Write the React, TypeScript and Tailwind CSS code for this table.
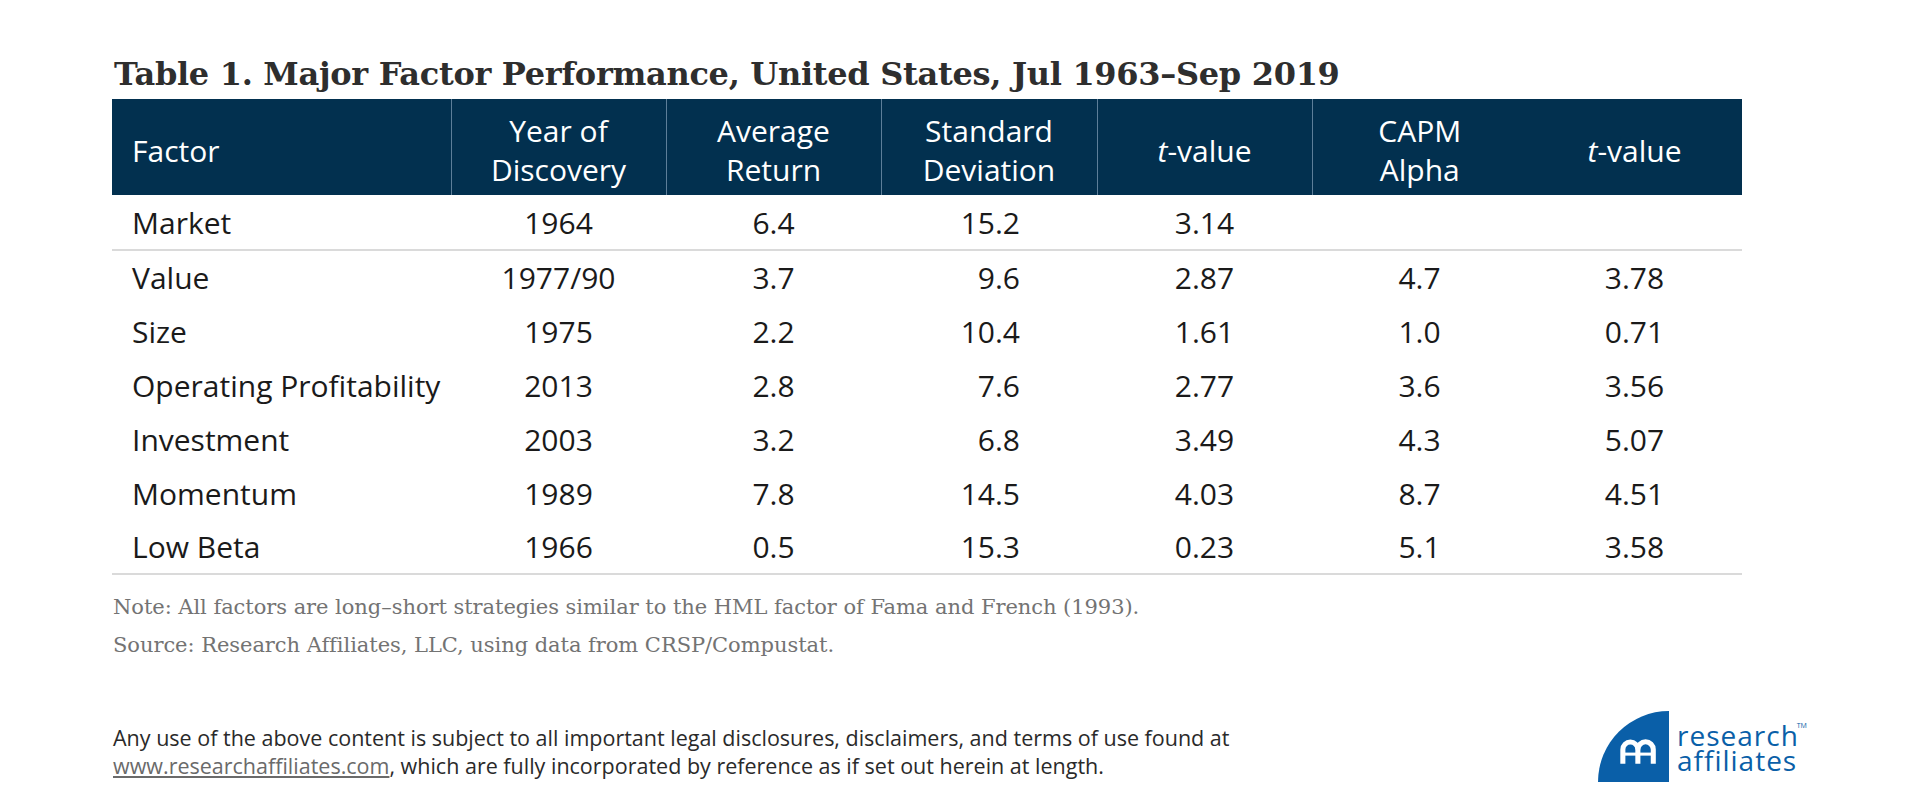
import React from "react";

const rows: [string, string, string, string, string, string, string][] = [
  ["Market", "1964", "6.4", "15.2", "3.14", "", ""],
  ["Value", "1977/90", "3.7", "9.6", "2.87", "4.7", "3.78"],
  ["Size", "1975", "2.2", "10.4", "1.61", "1.0", "0.71"],
  ["Operating Profitability", "2013", "2.8", "7.6", "2.77", "3.6", "3.56"],
  ["Investment", "2003", "3.2", "6.8", "3.49", "4.3", "5.07"],
  ["Momentum", "1989", "7.8", "14.5", "4.03", "8.7", "4.51"],
  ["Low Beta", "1966", "0.5", "15.3", "0.23", "5.1", "3.58"],
];

const sans = "font-['Open_Sans','Noto_Sans',sans-serif]";

function Logo() {
  return (
    <div className="flex items-start gap-[8px]">
      <svg width="71" height="71" viewBox="0 0 70 70" className="block shrink-0">
        <path d="M70 0 V70 H0 A70 70 0 0 1 70 0 Z" fill="#0a5fa8" />
        <g fill="none" stroke="#ffffff" strokeWidth="5" strokeLinecap="butt">
          <path d="M24.5 52 V38 A7.4 7.4 0 0 1 39.3 38 V52" />
          <path d="M39.3 38 A7.6 7.6 0 0 1 54.5 38 V52" />
          <path d="M24.5 42.5 H54.5" strokeWidth="3" />
        </g>
      </svg>
      <div className={`relative ${sans} text-[#0a5fa8] text-[28px] leading-[25px] tracking-[1px] mt-[12px]`}>
        <div>research</div>
        <div>affiliates</div>
        <span className="absolute -right-[8px] -top-[1px] text-[7px] leading-none tracking-normal">TM</span>
      </div>
    </div>
  );
}

export default function App() {
  return (
    <div className="w-[1920px] h-[810px] bg-white relative overflow-hidden">
      <div className="pl-[112px] pr-[178px] pt-[54px]">
        <h1 className="font-['DejaVu_Serif',serif] font-bold text-[32px] leading-[40px] text-[#2e2e2e] pl-[2px] h-[45px] whitespace-nowrap tracking-[-0.3px]">
          Table 1. Major Factor Performance, United States, Jul 1963–Sep 2019
        </h1>
        <table className={`w-[1630px] border-collapse ${sans} text-[30px] table-fixed`}>
          <colgroup>
            <col className="w-[339px]" />
            <col className="w-[215px]" />
            <col className="w-[215px]" />
            <col className="w-[216px]" />
            <col className="w-[215px]" />
            <col className="w-[215px]" />
            <col className="w-[215px]" />
          </colgroup>
          <thead>
            <tr className="bg-[#02304f] text-white h-[96px] leading-[39px]">
              <th className="font-normal text-left pl-[20px] pt-[6px] border-r border-[#5d7e99]">Factor</th>
              <th className="font-normal text-center pt-[6px] border-r border-[#5d7e99]">Year of<br />Discovery</th>
              <th className="font-normal text-center pt-[6px] border-r border-[#5d7e99]">Average<br />Return</th>
              <th className="font-normal text-center pt-[6px] border-r border-[#5d7e99]">Standard<br />Deviation</th>
              <th className="font-normal text-center pt-[6px] border-r border-[#5d7e99]"><i>t</i>-value</th>
              <th className="font-normal text-center pt-[6px]">CAPM<br />Alpha</th>
              <th className="font-normal text-center pt-[6px]"><i>t</i>-value</th>
            </tr>
          </thead>
          <tbody className="text-[#1a1a1a]">
            {rows.map((r, i) => (
              <tr
                key={r[0]}
                className={`${i === 0 ? "h-[55px] border-b-2 border-[#dadada]" : i === rows.length - 1 ? "h-[54px] border-b-2 border-[#dadada]" : "h-[54px]"}`}
              >
                <td className="pl-[20px] text-left">{r[0]}</td>
                <td className="text-center">{r[1]}</td>
                <td className="text-center">{r[2]}</td>
                <td className="text-right pr-[77px]">{r[3]}</td>
                <td className="text-center">{r[4]}</td>
                <td className="text-center">{r[5]}</td>
                <td className="text-center">{r[6]}</td>
              </tr>
            ))}
          </tbody>
        </table>
        <div className="font-['DejaVu_Serif',serif] text-[#737373] text-[21px] leading-[38px] mt-[13px] pl-[1px] tracking-[-0.05px]">
          <div>Note: All factors are long–short strategies similar to the HML factor of Fama and French (1993).</div>
          <div>Source: Research Affiliates, LLC, using data from CRSP/Compustat.</div>
        </div>
        <div className="flex items-start mt-[47px]">
          <div className={`w-[1486px] shrink-0 ${sans} text-[21.5px] leading-[28px] text-[#2a2a2a] pl-[1px] mt-[13px]`}>
            <div>Any use of the above content is subject to all important legal disclosures, disclaimers, and terms of use found at</div>
            <div>
              <span className="underline text-[#6a6a6a]">www.researchaffiliates.com</span>, which are fully incorporated by reference as if set out herein at length.
            </div>
          </div>
          <Logo />
        </div>
      </div>
    </div>
  );
}
